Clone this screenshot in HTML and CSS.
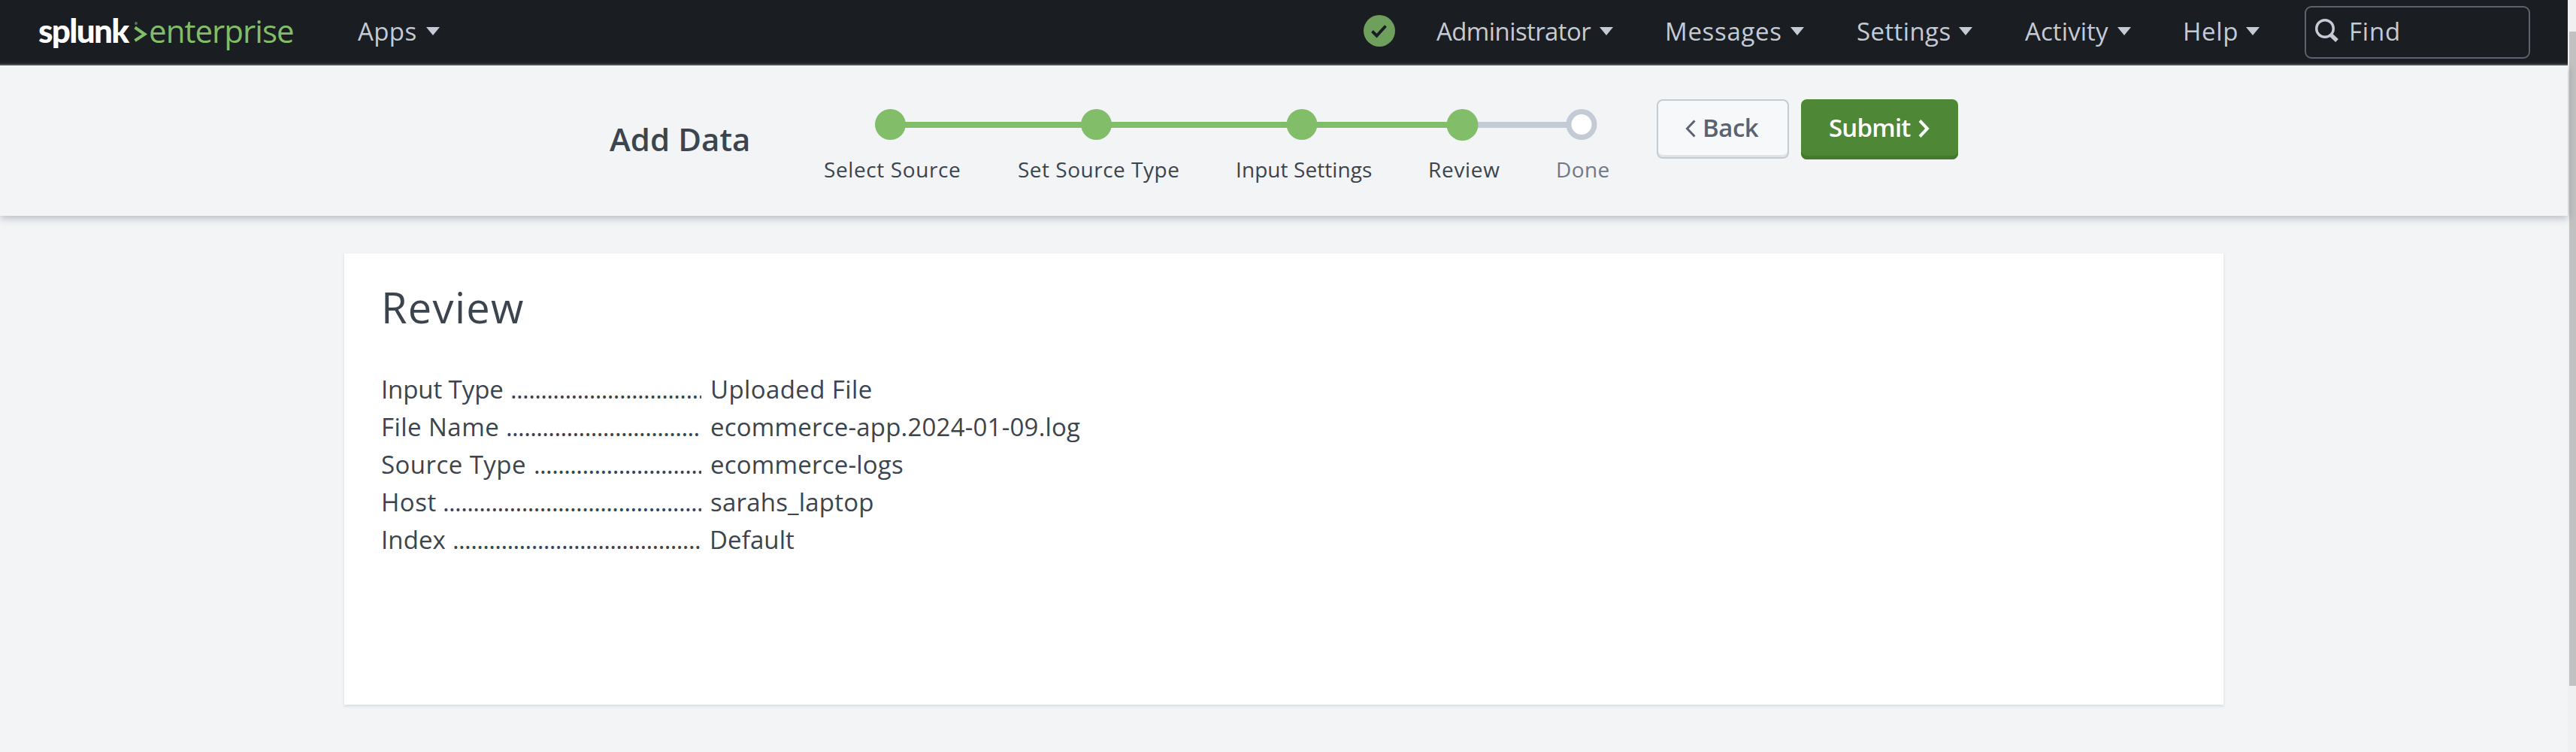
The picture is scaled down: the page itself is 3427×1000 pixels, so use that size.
FILE: index.html
```html
<!DOCTYPE html>
<html lang="en">
<head>
<meta charset="utf-8">
<title>Add Data - Review</title>
<link rel="stylesheet" href="styles.css">
</head>
<body>
<div class="app">
  <header class="nav">
    <div class="logo">
      <span class="logo-name">splunk</span>
      <svg class="logo-mark" width="20" height="40" viewBox="0 0 20 40"><circle cx="3" cy="11" r="2" fill="#4f7a45"/><path d="M1.500 16.500L14.500 25.500L1.500 34" fill="none" stroke="#82bd69" stroke-width="4"/></svg>
      <span class="logo-product">enterprise</span>
    </div>
    <div class="menu apps"><span>Apps</span><i class="caret"></i></div>
    <svg class="health" width="42" height="42" viewBox="0 0 42 42"><circle cx="21" cy="21" r="21" fill="#6f9f5c"/><path d="M11.500 21.500L17.500 27.500L29.500 14.500" fill="none" stroke="#1a1d21" stroke-width="4"/></svg>
    <div class="menu admin"><span>Administrator</span><i class="caret"></i></div>
    <div class="menu messages"><span>Messages</span><i class="caret"></i></div>
    <div class="menu settings"><span>Settings</span><i class="caret"></i></div>
    <div class="menu activity"><span>Activity</span><i class="caret"></i></div>
    <div class="menu help"><span>Help</span><i class="caret"></i></div>
    <div class="find">
      <svg width="32" height="32" viewBox="0 0 32 32" fill="none" stroke="#c5cbd5"><circle cx="13" cy="13" r="11.300" stroke-width="3.400"/><path d="M20.500 21L29 29" stroke-width="5.500"/></svg>
      <span>Find</span>
    </div>
  </header>
  <section class="wizard">
    <h1>Add Data</h1>
    <div class="steps">
      <svg class="track" width="961" height="42" viewBox="0 0 961 42">
        <path d="M20 21H781" stroke="#82bd69" stroke-width="8"/>
        <path d="M781 21H930" stroke="#c5cbd5" stroke-width="8"/>
        <g fill="#82bd69"><circle cx="20.500" cy="20.500" r="20.500"/><circle cx="294.500" cy="20.500" r="20.500"/><circle cx="568" cy="20.500" r="20.500"/><circle cx="781.500" cy="21" r="21"/></g>
        <circle cx="940" cy="20.500" r="17" fill="#fff" stroke="#c5cbd5" stroke-width="7"/>
      </svg>
      <div class="labels">
        <span class="l1">Select Source</span><span class="l2">Set Source Type</span><span>Input Settings</span><span class="l4">Review</span><span class="done">Done</span>
      </div>
    </div>
    <div class="actions">
      <button class="btn back"><svg width="14" height="24" viewBox="0 0 14 24"><path d="M12.500 1.500L2.500 12L12.500 22.500" fill="none" stroke="#5c6370" stroke-width="3"/></svg><span>Back</span></button>
      <button class="btn submit"><span>Submit</span><svg width="15" height="24" viewBox="0 0 15 24"><path d="M2 1.500L12 12L2 22.500" fill="none" stroke="#fff" stroke-width="4"/></svg></button>
    </div>
  </section>
  <main class="card">
    <h2>Review</h2>
    <dl>
      <dt><span>Input Type</span><i>................................</i></dt><dd class="v1">Uploaded File</dd>
      <dt class="k2"><span>File Name</span><i>................................</i></dt><dd class="v2">ecommerce-app.2024-01-09.log</dd>
      <dt class="k3"><span>Source Type</span><i>.............................</i></dt><dd>ecommerce-logs</dd>
      <dt class="k4"><span>Host</span><i>...........................................</i></dt><dd>sarahs_laptop</dd>
      <dt class="k5"><span>Index</span><i>.........................................</i></dt><dd class="v5">Default</dd>
    </dl>
  </main>
</div>
<div class="scrollbar"><div class="thumb"></div></div>
</body>
</html>
```
FILE: styles.css
```css
* { box-sizing: border-box; }
body {
  margin: 0; height: 1000px; overflow: hidden; display: flex;
  font: 400 33px/50px "Open Sans", sans-serif; color: #3c444d; background: #f2f4f6;
}
i { font-style: normal; }
svg { display: block; flex: none; }
.app { width: 3416px; height: 1000px; }

.nav {
  height: 87px; line-height: 83px; color: #c5cbd5; white-space: nowrap;
  background: linear-gradient(#1a1d21 80px, #26292c 85px, #4f5359 85px);
  display: grid; align-items: start;
  grid-template-columns: 51px 425px 1338px 97px 304px 255px 224px 210px 162px 300px;
}
.logo { grid-column: 2; display: flex; font-size: 42px; line-height: 81px; }
.logo-name { width: 127px; font-family: Lato, sans-serif; font-weight: 900; font-size: 44px; letter-spacing: -1.7px; color: #fff; }
.logo-mark { margin-top: 20px; }
.logo-product { color: #82bd69; letter-spacing: -.95px; }
.menu { display: flex; }
.menu span { flex: none; }
.caret { width: 18px; height: 11px; margin-top: 36px; background: #c5cbd5; clip-path: polygon(0 0, 100% 0, 50% 100%); }
.apps span { width: 91px; letter-spacing: .4px; }
.health { margin-top: 20px; }
.admin span { width: 217px; letter-spacing: -.6px; }
.messages span { width: 167px; letter-spacing: .7px; }
.settings span { width: 136px; letter-spacing: .4px; }
.activity span { width: 123px; letter-spacing: .09px; }
.help span { width: 84px; letter-spacing: .7px; }
.find {
  height: 70px; margin-top: 8px; padding-left: 12px; line-height: 63px; letter-spacing: .8px;
  border: 2px solid #5c636f; border-radius: 9px; display: flex; gap: 13px;
}
.find svg { margin-top: 15px; }

.wizard {
  position: relative; height: 200px; padding-left: 811px; background: #f2f4f6;
  box-shadow: 0 3px 10px rgba(20, 25, 60, .27);
  display: grid; grid-template-columns: 285px 1108px 402px; align-items: start;
}
h1 { margin: 73px 0 0; font-size: 42px; font-weight: 600; line-height: 50px; letter-spacing: .05px; white-space: nowrap; }
.steps { padding-top: 58px; }
.track { margin-left: 68px; }
.labels {
  margin-top: 18px; font-size: 28px; line-height: 41px; letter-spacing: .07px; white-space: nowrap;
  display: grid; grid-template-columns: 258px 290px 256px 170px 75px;
}
.l1 { letter-spacing: .6px; }
.l2 { letter-spacing: .5px; }
.l4 { letter-spacing: .7px; }
.done { letter-spacing: .4px; color: #6f7887; }
.actions { padding-top: 45px; display: flex; gap: 16px; }
.btn {
  font: 600 33px/76px "Open Sans", sans-serif; letter-spacing: -.5px; padding: 0; border: 0; border-radius: 8px;
  display: flex; text-align: left;
}
.back {
  width: 176px; height: 79px; padding-left: 36px; line-height: 72px; color: #5c6370; background: #f7f8fa;
  border: 2px solid #c3cbd4; box-shadow: inset 0 -3px #dfe3e5;
}
.back svg { margin: 25px 9px 0 0; }
.submit { width: 209px; height: 80px; padding-left: 37px; color: #fff; background: #4e8735; box-shadow: inset 0 -5px #447a2e; }
.submit span { width: 119px; letter-spacing: -.8px; }
.submit svg { margin-top: 27px; }

.card {
  width: 2500px; height: 600px; margin: 50px 0 0 458px; padding: 36px 0 0 49px; background: #fff;
  box-shadow: 0 2px 4px rgba(60, 90, 110, .15);
}
h2 { margin: 0 0 50px; font-size: 56px; font-weight: 400; line-height: 70px; letter-spacing: 1.3px; }
dl { margin: 0; display: grid; grid-template-columns: 426px 12px 800px; white-space: nowrap; }
dt { grid-column: 1; height: 50px; overflow: hidden; display: flex; }
dt span { flex: none; width: 172px; letter-spacing: -.1px; }
dt i { letter-spacing: -.62px; }
dd { grid-column: 3; margin: 0; letter-spacing: .2px; }
.k2 span { width: 166px; letter-spacing: .45px; }
.k3 span { width: 203px; letter-spacing: .45px; }
.k4 span { width: 82px; letter-spacing: .5px; }
.k5 span { width: 95px; letter-spacing: .1px; }
.v1 { letter-spacing: .4px; }
.v5 { margin-left: -1px; letter-spacing: .1px; }

.scrollbar { width: 11px; height: 1000px; padding: 42px 0 0 2px; background: #f0f0f0; }
.thumb { height: 870px; background: #c1c1c1; }
```
